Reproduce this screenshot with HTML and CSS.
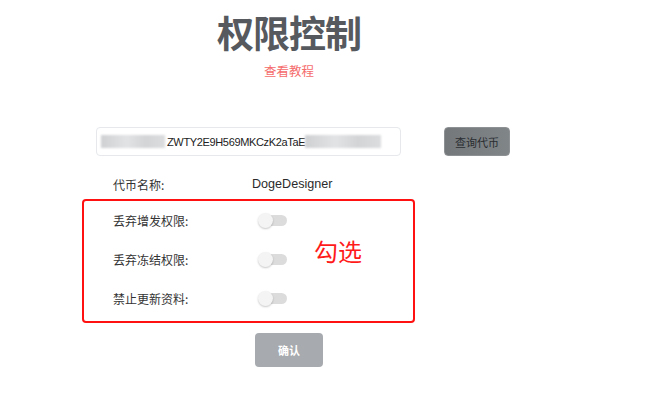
FILE: index.html
```html
<!DOCTYPE html>
<html lang="zh">
<head>
<meta charset="utf-8">
<title>权限控制</title>
<link rel="stylesheet" href="styles.css">
</head>
<body>
<main class="page">
  <header class="head">
    <h1 class="title">权限控制</h1>
    <a class="guide" href="#">查看教程</a>
  </header>

  <section class="search">
    <div class="addr-input">
      <span class="mask mask-left"></span>
      <span class="addr-text">ZWTY2E9H569MKCzK2aTaE</span>
      <span class="mask mask-right"></span>
    </div>
    <button class="query-btn" type="button">查询代币</button>
  </section>

  <div class="info-row">
    <span class="label">代币名称:</span>
    <span class="value">DogeDesigner</span>
  </div>

  <div class="perm-box">
    <div class="perm-row">
      <span class="label">丢弃增发权限:</span>
      <span class="switch"></span>
    </div>
    <div class="perm-row">
      <span class="label">丢弃冻结权限:</span>
      <span class="switch"></span>
    </div>
    <div class="perm-row">
      <span class="label">禁止更新资料:</span>
      <span class="switch"></span>
    </div>
    <span class="note">勾选</span>
  </div>

  <div class="actions">
    <button class="confirm-btn" type="button">确认</button>
  </div>
</main>
</body>
</html>
```

FILE: styles.css
```css
html, body {
  margin: 0;
  padding: 0;
  background: #ffffff;
}

body {
  font-family: "Noto Sans CJK SC", "Liberation Sans", sans-serif;
  color: #333333;
  width: 650px;
  height: 405px;
  overflow: hidden;
}

.page {
  padding-top: 10px;
}

.head {
  width: 578px;
  display: flex;
  flex-direction: column;
  align-items: center;
}

.title {
  margin: 0;
  font-size: 37px;
  line-height: 44px;
  font-weight: 700;
  color: #56595e;
  letter-spacing: -1px;
}

.guide {
  margin-top: 8px;
  font-size: 12.5px;
  line-height: 18px;
  color: #f56c6c;
  text-decoration: none;
}

.search {
  display: flex;
  align-items: center;
  margin-top: 47px;
  margin-left: 96px;
  gap: 43px;
}

.addr-input {
  box-sizing: border-box;
  width: 305px;
  height: 29px;
  border: 1px solid #e6e8ec;
  border-radius: 4px;
  display: flex;
  align-items: center;
  padding-left: 4px;
  overflow: hidden;
}

.mask {
  display: block;
  height: 13px;
  background: linear-gradient(90deg, #cfd0d2, #e2e3e5 40%, #d3d4d6 70%, #dcdddf);
  filter: blur(0.8px);
}

.mask-left {
  width: 64px;
  margin-right: 2px;
}

.mask-right {
  width: 76px;
  margin-left: 0;
}

.addr-text {
  font-family: "Liberation Sans", sans-serif;
  font-size: 11px;
  letter-spacing: -0.35px;
  color: #222222;
  white-space: nowrap;
}

.query-btn {
  box-sizing: border-box;
  width: 66px;
  height: 29px;
  border: 1px solid #8d9194;
  border-radius: 4px;
  background: linear-gradient(90deg, #74787b, #808588);
  color: #2a2d31;
  font-family: "Noto Sans CJK SC", sans-serif;
  font-size: 11px;
  padding: 0;
}

.info-row {
  display: flex;
  align-items: center;
  margin-top: 18px;
  margin-left: 113px;
  height: 20px;
  font-size: 12px;
}

.info-row .label {
  width: 139px;
}

.info-row .value {
  font-family: "Liberation Sans", sans-serif;
  font-size: 12.6px;
  color: #2b2b2b;
}

.perm-box {
  position: relative;
  box-sizing: border-box;
  margin-top: 5px;
  margin-left: 82px;
  width: 333px;
  height: 124px;
  border: 2px solid #ff1111;
  border-radius: 4px;
  padding-left: 29px;
}

.perm-row {
  display: flex;
  align-items: center;
  height: 39px;
  font-size: 12px;
}

.perm-row .label {
  width: 145px;
}

.switch {
  position: relative;
  display: inline-block;
  width: 29px;
  height: 15px;
}

.switch::before {
  content: "";
  position: absolute;
  left: 7px;
  top: 2px;
  width: 22px;
  height: 11px;
  border-radius: 6px;
  background: #dcdcdc;
}

.switch::after {
  content: "";
  position: absolute;
  left: 0;
  top: 0;
  width: 15px;
  height: 15px;
  border-radius: 50%;
  background: #f4f4f4;
  box-shadow: 0 1px 2px rgba(0, 0, 0, 0.22);
}

.note {
  position: absolute;
  left: 230px;
  top: 35px;
  font-size: 24px;
  line-height: 30px;
  color: #ff1a1a;
}

.actions {
  margin-top: 10px;
  margin-left: 255px;
}

.confirm-btn {
  width: 68px;
  height: 34px;
  border: none;
  border-radius: 4px;
  background: #a7aaae;
  color: #ffffff;
  font-family: "Noto Sans CJK SC", sans-serif;
  font-weight: 700;
  font-size: 11px;
  padding: 0;
}
```
